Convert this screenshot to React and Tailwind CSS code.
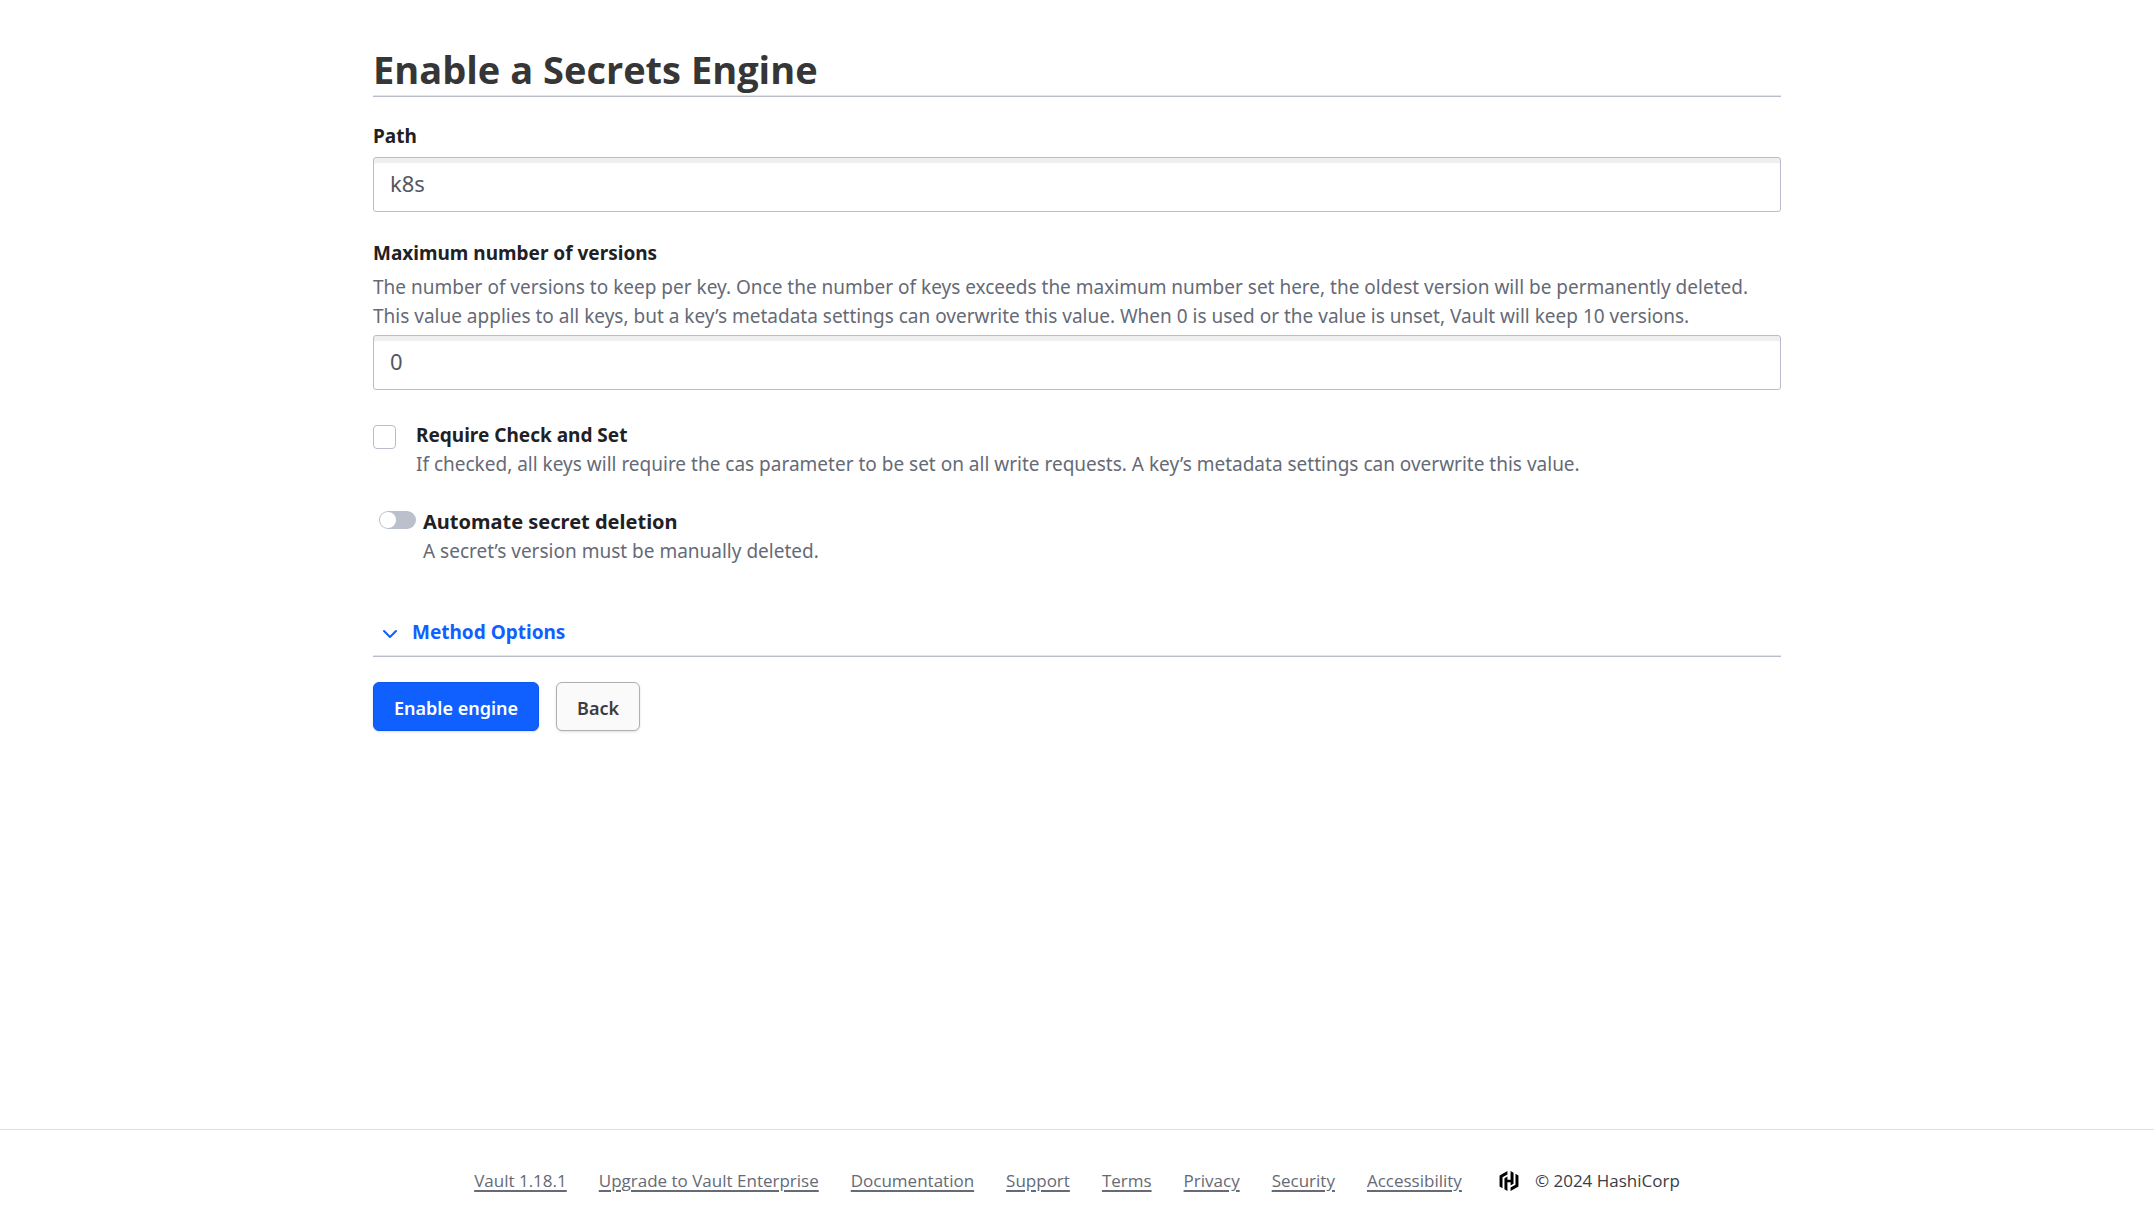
import { SiHashicorp } from "react-icons/si";

const footerLinks = [
  "Vault 1.18.1",
  "Upgrade to Vault Enterprise",
  "Documentation",
  "Support",
  "Terms",
  "Privacy",
  "Security",
  "Accessibility",
];

const inputClass =
  "block h-[55px] w-full rounded-[3px] border border-[#b8bccb] bg-white px-4 pb-1 text-[22px] text-[#535761] shadow-[inset_0_5px_1px_#efefef] outline-none focus:border-[#1563ff]";

export default function App() {
  return (
    <div className="flex min-h-screen flex-col bg-white font-['Noto_Sans','Open_Sans',sans-serif] text-[19px] leading-[29px] text-[#656a76]">
      <main className="mx-auto w-full max-w-[1408px] grow pt-11">
        <h1 className="border-b border-[#b8bccb] pb-px font-['Open_Sans','Noto_Sans',sans-serif] text-[38px] leading-[51px] font-bold text-[#363636] shadow-[inset_0_-1px_#e2e4ec]">
          Enable a Secrets Engine
        </h1>

        <form onSubmit={(e) => e.preventDefault()}>
          <div className="mt-6">
            <label htmlFor="path" className="block leading-[30px] font-bold text-[#1f2124]">
              Path
            </label>
            <input id="path" type="text" defaultValue="k8s" className={`${inputClass} mt-[6px]`} />
          </div>

          <div className="mt-[26px]">
            <label htmlFor="versions" className="block leading-[30px] font-bold text-[#1f2124]">
              Maximum number of versions
            </label>
            <p id="versions-help" className="mt-[5px]">
              The number of versions to keep per key. Once the number of keys exceeds the maximum number set here, the
              oldest version will be permanently deleted.{" "}
              <br />
              This value applies to all keys, but a key’s metadata settings can overwrite this value. When 0 is used or
              the value is unset, Vault will keep 10 versions.
            </p>
            <input
              id="versions"
              type="text"
              inputMode="numeric"
              defaultValue="0"
              aria-describedby="versions-help"
              className={`${inputClass} mt-1`}
            />
          </div>

          <div className="mt-[30px] flex gap-5">
            <input
              id="cas"
              type="checkbox"
              aria-describedby="cas-help"
              className="mt-[5px] h-6 w-[23px] shrink-0 appearance-none rounded border border-[#b8bccb] bg-white checked:bg-[#1060ff]"
            />
            <div>
              <label htmlFor="cas" className="block leading-[30px] font-bold text-[#1f2124]">
                Require Check and Set
              </label>
              <p id="cas-help">
                If checked, all keys will require the cas parameter to be set on all write requests. A key’s metadata
                settings can overwrite this value.
              </p>
            </div>
          </div>

          <div className="mt-7 flex gap-[7px] pl-[6px]">
            <input
              id="deletion"
              type="checkbox"
              role="switch"
              aria-describedby="deletion-help"
              className="mt-[4px] h-[18px] w-[37px] shrink-0 appearance-none rounded-full bg-[#bac1cc] p-px before:block before:size-4 before:rounded-full before:bg-white before:content-[''] checked:bg-[#1060ff] checked:before:ml-auto"
            />
            <div>
              <label htmlFor="deletion" className="block text-[20px] leading-[30px] font-bold text-[#1f2124]">
                Automate secret deletion
              </label>
              <p id="deletion-help">A secret’s version must be manually deleted.</p>
            </div>
          </div>

          <div className="mt-[52px] border-b border-[#b8bccb] pb-[9px] shadow-[inset_0_-1px_#e2e4ec]">
            <button type="button" className="flex items-center gap-3 pl-[7px] font-bold text-[#1060ff]">
              <svg viewBox="0 0 20 20" className="mt-1 size-5" fill="none" stroke="currentColor" strokeWidth="2" strokeLinecap="round" strokeLinejoin="round" aria-hidden="true">
                <path d="M4 6l6 6 6-6" />
              </svg>
              Method Options
            </button>
          </div>

          <div className="mt-[25px] flex gap-[17px]">
            <button
              type="submit"
              className="h-[49px] rounded-md border border-[#0c56e9] bg-[#1060ff] px-5 pt-1 text-[18px] font-semibold text-white shadow-sm"
            >
              Enable engine
            </button>
            <button
              type="button"
              className="h-[49px] rounded-md border border-[#aeb0b5] bg-[#fafafa] px-5 pt-1 text-[18px] font-semibold text-[#3b3d45] shadow-sm"
            >
              Back
            </button>
          </div>
        </form>
      </main>

      <footer className="flex flex-wrap items-center justify-center gap-x-8 border-t border-[#dedfe3] px-6 pt-9 pb-[34px] font-['Open_Sans','Noto_Sans',sans-serif] text-[17px]">
        {footerLinks.map((label) => (
          <a key={label} href="#" className="underline decoration-2 underline-offset-3">
            {label}
          </a>
        ))}
        <span className="ml-[5px] flex items-center gap-4 text-[#3b3d45]">
          <SiHashicorp className="size-5 text-black" aria-hidden="true" />
          © 2024 HashiCorp
        </span>
      </footer>
    </div>
  );
}
